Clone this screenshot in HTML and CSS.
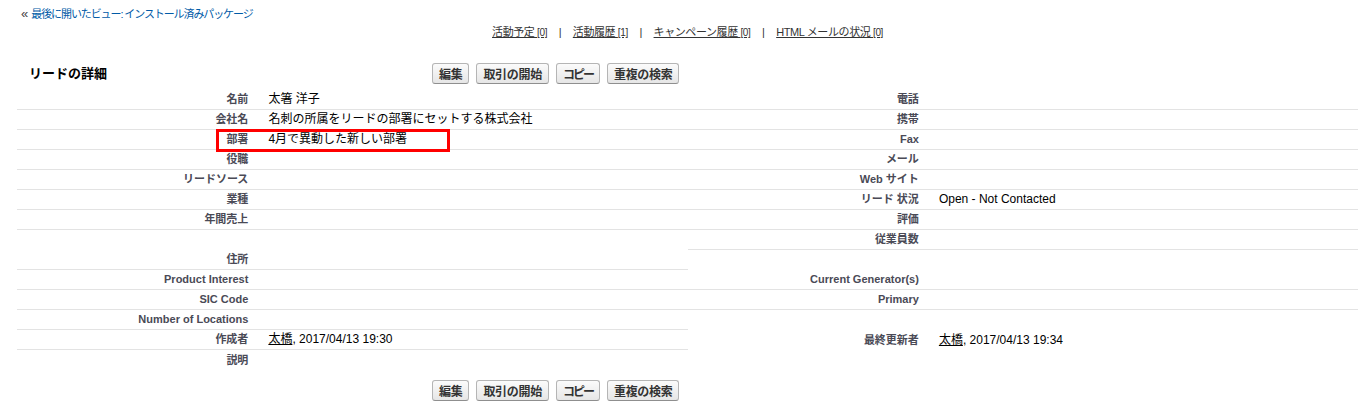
FILE: index.html
```html
<!DOCTYPE html>
<html lang="ja">
<head>
    <meta charset="UTF-8">
    <meta name="viewport" content="width=device-width, initial-scale=1.0">
    <title>リードの詳細</title>
    <link rel="stylesheet" href="styles.css">
</head>
<body>

    <div class="back">
        <span class="raquo">«</span>&nbsp;<a href="#">最後に開いたビュー: インストール済みパッケージ</a>
    </div>

    <div class="related">
        <a href="#">活動予定 <span class="count">[0]</span></a>
        <span class="sep">|</span>
        <a href="#">活動履歴 <span class="count">[1]</span></a>
        <span class="sep">|</span>
        <a href="#">キャンペーン履歴 <span class="count">[0]</span></a>
        <span class="sep">|</span>
        <a href="#">HTML メールの状況 <span class="count">[0]</span></a>
    </div>

    <div class="block">
        <div class="block-head">
            <h2 class="block-title">リードの詳細</h2>
            <div class="buttons">
                <button class="btn">編集</button>
                <button class="btn">取引の開始</button>
                <button class="btn btn-kana">コピー</button>
                <button class="btn">重複の検索</button>
            </div>
        </div>

        <div class="detail">
            <!-- 左の列 -->
            <div class="col">
                <div class="row"><div class="label">名前</div><div class="value">太箸 洋子</div></div>
                <div class="row"><div class="label">会社名</div><div class="value">名刺の所属をリードの部署にセットする株式会社</div></div>
                <div class="row marked">
                    <div class="label">部署</div><div class="value">4月で異動した新しい部署</div>
                    <div class="highlight"></div>
                </div>
                <div class="row"><div class="label">役職</div><div class="value"></div></div>
                <div class="row"><div class="label">リードソース</div><div class="value"></div></div>
                <div class="row"><div class="label">業種</div><div class="value"></div></div>
                <div class="row"><div class="label">年間売上</div><div class="value"></div></div>
                <div class="row tall"><div class="label">住所</div><div class="value"></div></div>
                <div class="row"><div class="label">Product Interest</div><div class="value"></div></div>
                <div class="row"><div class="label">SIC Code</div><div class="value"></div></div>
                <div class="row"><div class="label">Number of Locations</div><div class="value"></div></div>
                <div class="row"><div class="label">作成者</div><div class="value"><a href="#" class="user">太橋</a>, 2017/04/13 19:30</div></div>
                <div class="row last"><div class="label">説明</div><div class="value"></div></div>
            </div>

            <!-- 右の列 -->
            <div class="col">
                <div class="row"><div class="label">電話</div><div class="value"></div></div>
                <div class="row"><div class="label">携帯</div><div class="value"></div></div>
                <div class="row"><div class="label">Fax</div><div class="value"></div></div>
                <div class="row"><div class="label">メール</div><div class="value"></div></div>
                <div class="row"><div class="label">Web サイト</div><div class="value"></div></div>
                <div class="row"><div class="label">リード 状況</div><div class="value">Open - Not Contacted</div></div>
                <div class="row"><div class="label">評価</div><div class="value"></div></div>
                <div class="row"><div class="label">従業員数</div><div class="value"></div></div>
                <div class="row tall"><div class="label">Current Generator(s)</div><div class="value"></div></div>
                <div class="row"><div class="label">Primary</div><div class="value"></div></div>
                <div class="row tall last"><div class="label">最終更新者</div><div class="value"><a href="#" class="user">太橋</a>, 2017/04/13 19:34</div></div>
            </div>
        </div>

        <div class="block-foot">
            <div class="buttons">
                <button class="btn">編集</button>
                <button class="btn">取引の開始</button>
                <button class="btn btn-kana">コピー</button>
                <button class="btn">重複の検索</button>
            </div>
        </div>
    </div>

</body>
</html>
```

FILE: styles.css
```css
body {
    margin: 0;
    font-family: "Liberation Sans", "Noto Sans CJK JP", sans-serif;
    font-size: 12px;
    color: #000;
    background-color: #fff;
}

a {
    color: #000;
}

/* 最後に開いたビュー */
.back {
    height: 14px;
    padding: 7px 0 0 21px;
    font-size: 11px;
    line-height: 14px;
    color: #333;
}

.back a {
    color: #015ba7;
    text-decoration: none;
    letter-spacing: -1.1px;
}

.raquo {
    font-size: 13px;
    color: #444;
}

/* 関連リストへのリンク */
.related {
    height: 14px;
    margin: 4px 1px 0 17px;
    text-align: center;
    font-size: 11px;
    line-height: 14px;
    letter-spacing: -0.4px;
    color: #333;
}

.related a {
    color: #333;
}

.related .count {
    font-size: 10px;
}

.related .sep {
    margin: 0 9px;
}

/* ページブロック */
.block {
    margin: 24px 1px 0 17px;
}

.block-head {
    display: flex;
    align-items: center;
    height: 21px;
    margin-bottom: 6px;
}

.block-title {
    margin: -3px 0 0 0;
    width: 415px;
    padding-left: 12px;
    box-sizing: border-box;
    font-size: 13px;
    font-weight: bold;
    color: #000;
}

.buttons {
    display: flex;
    gap: 7px;
}

.btn {
    height: 21px;
    padding: 0 6px;
    font-family: "Liberation Sans", "Noto Sans CJK JP", sans-serif;
    font-size: 12px;
    font-weight: bold;
    letter-spacing: -0.3px;
    color: #333;
    background: linear-gradient(#fbfbfb, #e6e6e6);
    border: 1px solid #b5b5b5;
    border-bottom-color: #8f8f8f;
    border-radius: 3px;
    cursor: pointer;
}

.btn-kana {
    letter-spacing: -2px;
}

.btn:hover {
    background: linear-gradient(#fff, #ececec);
}

/* 詳細リスト */
.detail {
    display: flex;
}

.col {
    width: 50%;
    display: flex;
    flex-direction: column;
}

.row {
    display: flex;
    align-items: flex-end;
    height: 20px;
    border-bottom: 1px solid #e3e3e3;
    box-sizing: border-box;
    position: relative;
}

.row.tall {
    height: 40px;
}

.row.last {
    border-bottom: none;
}

.label {
    width: 36%;
    padding: 0 10px 3px 2px;
    box-sizing: border-box;
    text-align: right;
    font-size: 11px;
    font-weight: bold;
    line-height: 14px;
    color: #4a4a56;
    white-space: nowrap;
}

.value {
    flex: 1;
    padding: 0 10px 3px 10px;
    font-size: 12px;
    line-height: 14px;
    white-space: nowrap;
}

.user {
    color: #000;
    text-decoration: underline;
}

/* 赤枠の注記 */
.highlight {
    position: absolute;
    left: 199px;
    top: -1px;
    width: 234px;
    height: 23px;
    border: 3px solid #f00;
    box-sizing: border-box;
}

.block-foot {
    display: flex;
    padding-left: 415px;
    margin-top: 10px;
}
```
